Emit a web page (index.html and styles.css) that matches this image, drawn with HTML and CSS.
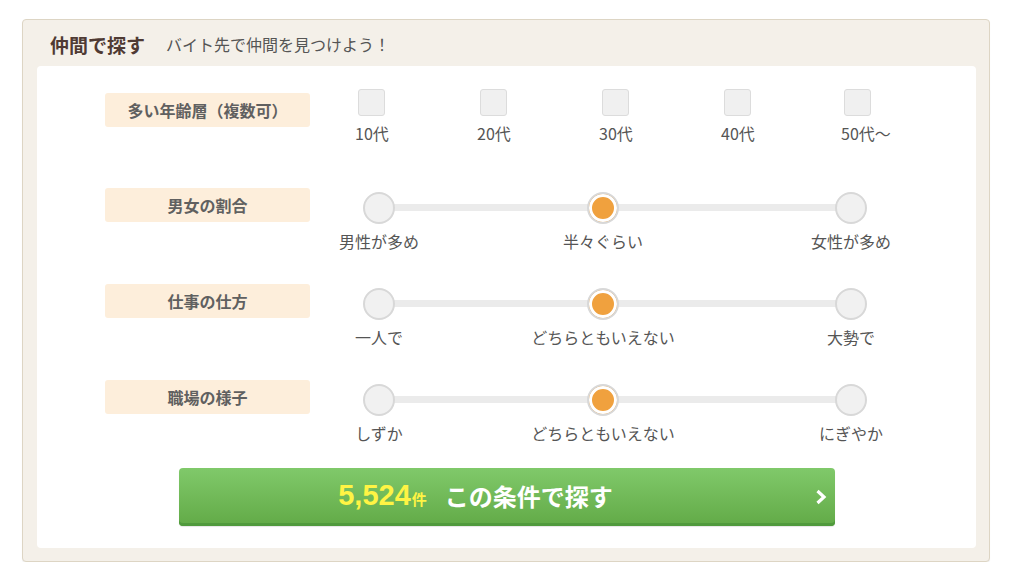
FILE: index.html
```html
<!DOCTYPE html>
<html lang="ja">
<head>
<meta charset="utf-8">
<title>仲間で探す</title>
<link rel="stylesheet" href="styles.css">
</head>
<body>
<section class="box">
  <header class="box-head">
    <h2 class="box-title">仲間で探す</h2>
    <p class="box-sub">バイト先で仲間を見つけよう！</p>
  </header>
  <div class="panel">
    <div class="row row-age">
      <div class="label">多い年齢層（複数可）</div>
      <div class="checks">
        <label class="check"><span class="check-box"></span><span class="check-text">10代</span></label>
        <label class="check"><span class="check-box"></span><span class="check-text">20代</span></label>
        <label class="check"><span class="check-box"></span><span class="check-text">30代</span></label>
        <label class="check"><span class="check-box"></span><span class="check-text">40代</span></label>
        <label class="check"><span class="check-box"></span><span class="check-text">50代〜</span></label>
      </div>
    </div>
    <div class="row row-slider">
      <div class="label">男女の割合</div>
      <div class="slider">
        <div class="opt opt-1"><span class="dot"></span><span class="opt-text">男性が多め</span></div>
        <div class="opt opt-2"><span class="dot dot-on"></span><span class="opt-text">半々ぐらい</span></div>
        <div class="opt opt-3"><span class="dot"></span><span class="opt-text">女性が多め</span></div>
      </div>
    </div>
    <div class="row row-slider">
      <div class="label">仕事の仕方</div>
      <div class="slider">
        <div class="opt opt-1"><span class="dot"></span><span class="opt-text">一人で</span></div>
        <div class="opt opt-2"><span class="dot dot-on"></span><span class="opt-text">どちらともいえない</span></div>
        <div class="opt opt-3"><span class="dot"></span><span class="opt-text">大勢で</span></div>
      </div>
    </div>
    <div class="row row-slider row-last">
      <div class="label">職場の様子</div>
      <div class="slider">
        <div class="opt opt-1"><span class="dot"></span><span class="opt-text">しずか</span></div>
        <div class="opt opt-2"><span class="dot dot-on"></span><span class="opt-text">どちらともいえない</span></div>
        <div class="opt opt-3"><span class="dot"></span><span class="opt-text">にぎやか</span></div>
      </div>
    </div>
    <button class="search-btn" type="button">
      <span class="count">5,524<small>件</small></span>
      <span class="btn-text">この条件で探す</span>
      <svg class="btn-arrow" width="12" height="16" viewBox="0 0 12 16" aria-hidden="true"><path d="M2.5 2 L9 8 L2.5 14" fill="none" stroke="#fff" stroke-width="3.2" stroke-linecap="butt" stroke-linejoin="miter"/></svg>
    </button>
  </div>
</section>
</body>
</html>
```

FILE: styles.css
```css
* { box-sizing: border-box; }
body {
  margin: 0;
  background: #fff;
  font-family: "Noto Sans CJK JP", "Noto Sans", sans-serif;
  color: #555;
}
.box {
  margin: 19px 0 0 22px;
  width: 968px;
  height: 543px;
  background: #f4f0e9;
  border: 1px solid #ddd5c4;
  border-radius: 4px;
  padding: 0 13px 12px 14px;
  box-shadow: 0 1px 1px rgba(0,0,0,0.06);
}
.box-head {
  height: 46px;
  display: flex;
  align-items: center;
  padding: 2px 0 0 13px;
}
.box-title {
  margin: 0;
  font-size: 19px;
  font-weight: 700;
  color: #4f3a33;
  line-height: 1;
}
.box-sub {
  margin: 0 0 0 21px;
  font-size: 16px;
  color: #555;
  line-height: 1;
}
.panel {
  background: #fff;
  border-radius: 4px;
  height: 482px;
  padding: 23px 0 0 68px;
}
.row {
  display: flex;
  align-items: flex-start;
}
.row-age { height: 54px; margin-bottom: 45px; }
.row-slider { height: 64px; margin-bottom: 32px; }
.row-slider.row-last { margin-bottom: 24px; }
.label {
  width: 205px;
  height: 34px;
  flex: none;
  background: #fdeedb;
  border-radius: 3px;
  display: flex;
  align-items: center;
  justify-content: center;
  font-size: 16px;
  font-weight: 700;
  color: #606060;
}
.row-age .label { margin-top: 4px; }
.checks {
  display: grid;
  grid-template-columns: 122px 122px 122px 122px 122px;
  margin-left: 45px;
}
.check {
  display: flex;
  flex-direction: column;
  align-items: flex-start;
}
.check:last-child { margin-left: -2px; }
.check-box {
  width: 27px;
  height: 27px;
  margin-left: 3px;
  background: #f0f0f0;
  border: 1px solid #dcdcdc;
  border-radius: 3px;
}
.check-text {
  margin-top: 7px;
  font-size: 16px;
  line-height: 20px;
  color: #555;
  white-space: nowrap;
}
.slider {
  position: relative;
  display: grid;
  grid-template-columns: 96px 128px 96px 152px 96px;
  margin-left: 21px;
  padding-top: 4px;
}
.slider::before {
  content: "";
  position: absolute;
  left: 48px;
  right: 48px;
  top: 16px;
  height: 7px;
  background: #ebebeb;
}
.opt {
  position: relative;
  display: flex;
  flex-direction: column;
  align-items: center;
}
.opt-1 { grid-column: 1; }
.opt-2 { grid-column: 3; }
.opt-3 { grid-column: 5; }
.dot {
  width: 32px;
  height: 32px;
  border-radius: 50%;
  background: #f1f1f1;
  border: 2px solid #d8d8d8;
}
.dot-on {
  background: #f0a13e;
  box-shadow: inset 0 0 0 3px #fff;
}
.opt-text {
  margin-top: 7px;
  font-size: 16px;
  line-height: 20px;
  color: #555;
  white-space: nowrap;
}
.search-btn {
  position: relative;
  margin-left: 74px;
  width: 656px;
  height: 58px;
  border: none;
  border-radius: 4px;
  background: linear-gradient(#80c96a, #62aa47);
  box-shadow: inset 0 -3px 0 #509a3d, 0 1px 1px rgba(0,0,0,0.1);
  display: flex;
  align-items: center;
  justify-content: center;
  padding: 0 63px 3px 0;
  font-family: inherit;
  cursor: pointer;
}
.count {
  color: #fff444;
  font-size: 29px;
  font-weight: 700;
  line-height: 1;
  font-family: "Liberation Sans", "Noto Sans CJK JP", sans-serif;
}
.count small {
  font-size: 15px;
  font-weight: 700;
  margin-left: 1px;
  font-family: "Noto Sans CJK JP", sans-serif;
}
.btn-text {
  margin-left: 18px;
  color: #fff;
  font-size: 24px;
  font-weight: 700;
  line-height: 1;
}
.btn-arrow {
  position: absolute;
  right: 8px;
  top: 21px;
}
```
